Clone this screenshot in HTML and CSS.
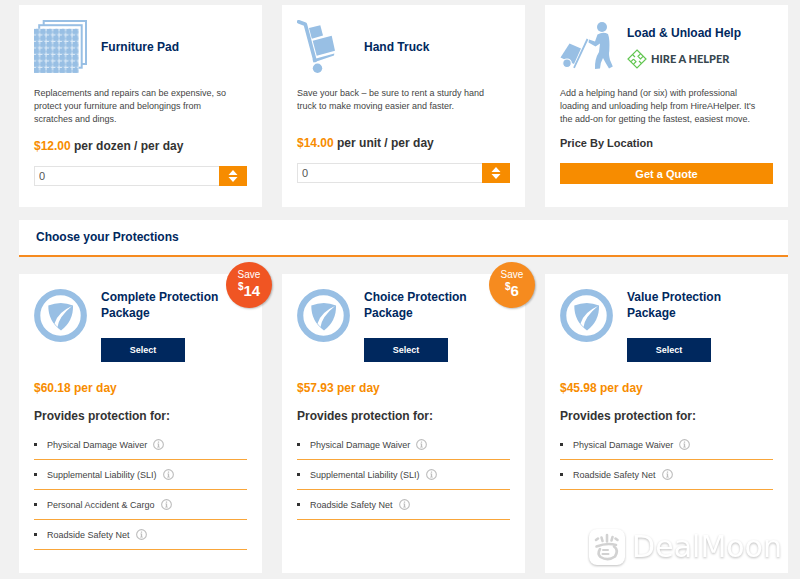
FILE: index.html
```html
<!DOCTYPE html>
<html lang="en">
<head>
    <meta charset="UTF-8">
    <meta name="viewport" content="width=device-width, initial-scale=1.0">
    <title>Choose your Protections</title>
    <link rel="stylesheet" href="styles.css">
</head>
<body>
    <svg class="sprite" aria-hidden="true">
        <symbol id="shield" viewBox="0 0 53 53">
            <circle cx="26.5" cy="26.5" r="23.3" fill="none" stroke="#98bfe4" stroke-width="6.2"/>
            <path d="M14.300 16.500Q27 11.500 39 16.500Q39.500 32 27 41.500Q14 32 14.300 16.500Z" fill="#98bfe4"/>
            <path d="M38 17Q24 23 20.500 34.500L23.500 38Q25 27.500 38 17Z" fill="#fff"/>
        </symbol>
        <symbol id="info" viewBox="0 0 12 12">
            <circle cx="6" cy="6" r="5.300" fill="none" stroke="#bdbdbd" stroke-width="1.200"/>
            <path d="M5.300 2.800h1.400v1.300H5.300zM4.800 5h1.900v3.500h.8v.9h-3v-.9h.8V5.800h-.5z" fill="#bdbdbd"/>
        </symbol>
        <symbol id="arrows" viewBox="0 0 10 14">
            <path d="M5 1l4.500 5H.5zM5 13l4.500-5H.5z" fill="#fff"/>
        </symbol>
    </svg>

    <main class="page">
        <section class="cards">
            <article class="card">
                <div class="card-head">
                    <svg class="icon" viewBox="0 0 53 53" aria-hidden="true">
                        <defs>
                            <pattern id="weave" x="0" y="9" width="6.500" height="6.500" patternUnits="userSpaceOnUse">
                                <rect width="6.500" height="6.500" fill="#98bfe4"/>
                                <path d="M5.600 0v6.500M0 5.900h6.500" stroke="#dceaf7" stroke-width="1.200"/>
                                <path d="M5.600 2v2M2 5.900h2" stroke="#98bfe4" stroke-width="1.200"/>
                            </pattern>
                        </defs>
                        <rect x="9.700" y="1" width="42.300" height="43" fill="#fff" stroke="#98bfe4" stroke-width="2"/>
                        <rect x="5.200" y="5.200" width="42.500" height="42.500" fill="#fff" stroke="#98bfe4" stroke-width="2"/>
                        <rect x="0" y="8.700" width="44.700" height="44.300" fill="url(#weave)"/>
                    </svg>
                    <h2 class="card-title">Furniture Pad</h2>
                </div>
                <p class="text">Replacements and repairs can be expensive, so protect your furniture and belongings from scratches and dings.</p>
                <p class="price"><span class="amount">$12.00</span> per dozen / per day</p>
                <div class="stepper">
                    <input class="stepper-input" type="text" value="0" aria-label="Furniture pad quantity">
                    <button class="stepper-btn" type="button" aria-label="Change quantity"><svg class="arrows"><use href="#arrows"/></svg></button>
                </div>
            </article>

            <article class="card">
                <div class="card-head">
                    <svg class="icon" viewBox="0 0 53 53" fill="#98bfe4" aria-hidden="true">
                        <path d="M1.600 1.800L8.300 4.300L18 40.500" fill="none" stroke="#98bfe4" stroke-width="3.600" stroke-linejoin="round" stroke-linecap="round"/>
                        <path d="M15.500 39.500L37.300 33.600L37 35.500L16.500 42.500Z"/>
                        <path d="M12 8L23.300 5.300L26 15.500L14.800 18.800Z"/>
                        <path d="M15.700 20.800L34.700 15.700L38 30.700L19.700 35.800Z"/>
                        <circle cx="20.500" cy="48.300" r="4.700"/>
                    </svg>
                    <h2 class="card-title">Hand Truck</h2>
                </div>
                <p class="text">Save your back – be sure to rent a sturdy hand truck to make moving easier and faster.</p>
                <p class="price"><span class="amount">$14.00</span> per unit / per day</p>
                <div class="stepper">
                    <input class="stepper-input" type="text" value="0" aria-label="Hand truck quantity">
                    <button class="stepper-btn" type="button" aria-label="Change quantity"><svg class="arrows"><use href="#arrows"/></svg></button>
                </div>
            </article>

            <article class="card">
                <div class="card-head">
                    <svg class="icon" viewBox="0 0 53 53" fill="#98bfe4" aria-hidden="true">
                        <circle cx="42" cy="7" r="5"/>
                        <path d="M37.500 14.500Q43 11.500 48 14Q50 19 49.300 31Q48.500 34 50 40L52.800 46.500L49 48.500Q45 42 43 38Q40.500 42 40 48.500L35 49Q34.500 39 39 32L40 23.500L35.500 26.500L28.500 22.500L29 19.500L35 21.500Z"/>
                        <path d="M27.500 19L14 47.800" stroke="#98bfe4" stroke-width="1.800"/>
                        <path d="M9.500 23.500L21 28.500L14 44L.5 37.500Z"/>
                        <circle cx="7" cy="43.300" r="4.300" stroke="#fff" stroke-width="1.200"/>
                    </svg>
                    <div class="card-heading">
                        <h2 class="card-title">Load &amp; Unload Help</h2>
                        <div class="brand">
                            <svg class="brand-mark" viewBox="0 0 20 20" fill="none" stroke="#62c651" stroke-width="1.200" aria-hidden="true">
                                <path d="M10 1L19 10L10 19L1 10Z"/>
                                <path d="M6.500 10.200L9 12.700L6.500 15.200M4 12.700L6.500 10.200M13.500 4.800L11 7.300L13.500 9.800L16 7.300"/>
                                <path d="M5.500 5.500L8 8M14.500 14.500L12 12"/>
                            </svg>
                            <span class="brand-name">HIRE A HELPER</span>
                        </div>
                    </div>
                </div>
                <p class="text">Add a helping hand (or six) with professional loading and unloading help from HireAHelper. It's the add-on for getting the fastest, easiest move.</p>
                <p class="location">Price By Location</p>
                <button class="quote-btn" type="button">Get a Quote</button>
            </article>
        </section>

        <h1 class="section-title">Choose your Protections</h1>

        <section class="cards">
            <article class="card">
                <div class="badge badge-red">
                    <span class="badge-label">Save</span>
                    <span class="badge-value"><sup>$</sup>14</span>
                </div>
                <div class="card-head card-head-top">
                    <svg class="icon" aria-hidden="true"><use href="#shield"/></svg>
                    <div class="package">
                        <h2 class="card-title">Complete Protection Package</h2>
                        <button class="select-btn" type="button">Select</button>
                    </div>
                </div>
                <p class="rate">$60.18 per day</p>
                <h3 class="list-title">Provides protection for:</h3>
                <ul class="list">
                    <li>Physical Damage Waiver <button class="info" type="button" aria-label="More info"><svg><use href="#info"/></svg></button></li>
                    <li>Supplemental Liability (SLI) <button class="info" type="button" aria-label="More info"><svg><use href="#info"/></svg></button></li>
                    <li>Personal Accident &amp; Cargo <button class="info" type="button" aria-label="More info"><svg><use href="#info"/></svg></button></li>
                    <li>Roadside Safety Net <button class="info" type="button" aria-label="More info"><svg><use href="#info"/></svg></button></li>
                </ul>
            </article>

            <article class="card">
                <div class="badge">
                    <span class="badge-label">Save</span>
                    <span class="badge-value"><sup>$</sup>6</span>
                </div>
                <div class="card-head card-head-top">
                    <svg class="icon" aria-hidden="true"><use href="#shield"/></svg>
                    <div class="package">
                        <h2 class="card-title">Choice Protection Package</h2>
                        <button class="select-btn" type="button">Select</button>
                    </div>
                </div>
                <p class="rate">$57.93 per day</p>
                <h3 class="list-title">Provides protection for:</h3>
                <ul class="list">
                    <li>Physical Damage Waiver <button class="info" type="button" aria-label="More info"><svg><use href="#info"/></svg></button></li>
                    <li>Supplemental Liability (SLI) <button class="info" type="button" aria-label="More info"><svg><use href="#info"/></svg></button></li>
                    <li>Roadside Safety Net <button class="info" type="button" aria-label="More info"><svg><use href="#info"/></svg></button></li>
                </ul>
            </article>

            <article class="card">
                <div class="card-head card-head-top">
                    <svg class="icon" aria-hidden="true"><use href="#shield"/></svg>
                    <div class="package">
                        <h2 class="card-title">Value Protection Package</h2>
                        <button class="select-btn" type="button">Select</button>
                    </div>
                </div>
                <p class="rate">$45.98 per day</p>
                <h3 class="list-title">Provides protection for:</h3>
                <ul class="list">
                    <li>Physical Damage Waiver <button class="info" type="button" aria-label="More info"><svg><use href="#info"/></svg></button></li>
                    <li>Roadside Safety Net <button class="info" type="button" aria-label="More info"><svg><use href="#info"/></svg></button></li>
                </ul>
                <div class="watermark">
                    <svg class="watermark-logo" viewBox="0 0 38 38" aria-hidden="true">
                        <rect x="1" y="1" width="36" height="36" rx="8" fill="#fff"/>
                        <g fill="none" stroke="#d2d2d2" stroke-width="2.600" stroke-linecap="round">
                            <path d="M8 12l2-1.500M13.500 9.500l1 3.500M19 7v6.500M24.500 9l-1 3.500M29.500 12l-2-1.500"/>
                            <path d="M8.500 18.500Q19 14.500 28 17"/>
                            <path d="M12 21Q9 26 12.500 29Q20 33.500 27 28.500Q31 22 26 18.500"/>
                            <path d="M15 22h5M14.500 26h6" stroke-width="2"/>
                        </g>
                    </svg>
                    <span class="watermark-text">DealMoon</span>
                </div>
            </article>
        </section>
    </main>
</body>
</html>
```
FILE: styles.css
```css
*{
    margin: 0;
    padding: 0;
    box-sizing: border-box;
}
:root{
    --navy: #00285e;
    --orange: #f78c00;
    --light-orange: #f68b1f;
}
body{
    background-color: #f1f1f1;
    color: #333;
    font-family: "Liberation Sans", Arial, sans-serif;
    font-size: 9px;
}
button, input{
    font-family: inherit;
    border: none;
}
button{
    cursor: pointer;
}
.sprite{
    position: absolute;
    width: 0;
    height: 0;
}
.page{
    padding: 5px 12px 6px 19px;
}
.cards{
    display: grid;
    grid-template-columns: repeat(3, 1fr);
    gap: 20px;
}
.card{
    position: relative;
    padding: 15px 15px 21px;
    background-color: #fff;
}
.card-head{
    display: flex;
    align-items: center;
    gap: 14px;
}
.card-head-top{
    align-items: flex-start;
}
.icon{
    flex: none;
    width: 53px;
    height: 53px;
}
.card-title{
    color: var(--navy);
    font-size: 12px;
    line-height: 16px;
}
.card-heading{
    display: flex;
    flex-direction: column;
    gap: 8px;
}
.brand{
    display: flex;
    align-items: center;
    gap: 4px;
}
.brand-mark{
    width: 20px;
    height: 20px;
}
.brand-name{
    color: #37474f;
    font-family: Lato, sans-serif;
    font-size: 11px;
    font-weight: 900;
}
.text{
    min-height: 36px;
    margin-top: 14px;
    padding-right: 10px;
    color: #444;
    line-height: 13px;
}
.price{
    margin-top: 12px;
    font-size: 12px;
    font-weight: bold;
    line-height: 16px;
}
.amount{
    color: var(--orange);
}
.location{
    margin-top: 9px;
    font-size: 11px;
    font-weight: bold;
    line-height: 16px;
}
.stepper{
    display: flex;
    height: 20px;
    margin-top: 12px;
}
.stepper-input{
    flex: 1;
    min-width: 0;
    padding: 0 4px;
    border: 1px solid #e3e3e3;
    border-right: none;
    color: #555;
    font-size: 11px;
}
.stepper-btn{
    display: flex;
    justify-content: center;
    align-items: center;
    width: 28px;
    background-color: var(--orange);
}
.arrows{
    width: 10px;
    height: 14px;
}
.quote-btn{
    width: 100%;
    height: 21px;
    margin-top: 12px;
    background-color: var(--orange);
    color: #fff;
    font-size: 11px;
    font-weight: bold;
}
.section-title{
    margin: 13px 0 17px;
    padding: 0 17px;
    border-bottom: 2px solid var(--light-orange);
    background-color: #fff;
    color: var(--navy);
    font-size: 12px;
    line-height: 35px;
}
.package{
    max-width: 130px;
}
.select-btn{
    display: block;
    width: 84px;
    height: 24px;
    margin-top: 17px;
    background-color: var(--navy);
    color: #fff;
    font-size: 9px;
    font-weight: bold;
}
.badge{
    position: absolute;
    top: -12px;
    right: -10px;
    display: flex;
    flex-direction: column;
    align-items: center;
    width: 46px;
    height: 46px;
    padding-top: 7px;
    border-radius: 50%;
    background-color: var(--light-orange);
    box-shadow: 1px 1px 2px rgba(0, 0, 0, .25);
    color: #fff;
}
.badge-red{
    background-color: #f05523;
}
.badge-label{
    font-size: 10px;
    line-height: 12px;
}
.badge-value{
    display: flex;
    font-size: 15px;
    font-weight: bold;
    line-height: 20px;
}
.badge-value sup{
    font-size: 10px;
    line-height: 12px;
}
.rate{
    margin-top: 18px;
    color: var(--orange);
    font-size: 12px;
    font-weight: bold;
    line-height: 16px;
}
.list-title{
    margin: 12px 0 6px;
    font-size: 12px;
    line-height: 16px;
}
.list{
    padding-bottom: 2px;
    list-style: none;
}
.list li{
    display: flex;
    align-items: center;
    height: 30px;
    border-bottom: 1px solid #f9a63a;
    color: #444;
}
.list li::before{
    content: "";
    width: 3px;
    height: 3px;
    margin-right: 10px;
    background-color: #333;
}
.info{
    width: 11px;
    height: 11px;
    margin-left: 6px;
    background: none;
}
.info svg{
    display: block;
    width: 11px;
    height: 11px;
}
.watermark{
    position: absolute;
    right: 6px;
    bottom: 7px;
    display: flex;
    align-items: center;
    gap: 6px;
    filter: drop-shadow(0 1px 1px rgba(0, 0, 0, .25));
}
.watermark-logo{
    width: 38px;
    height: 38px;
}
.watermark-text{
    color: #fff;
    font-family: "DejaVu Sans", sans-serif;
    font-size: 30px;
    line-height: 38px;
}
```
